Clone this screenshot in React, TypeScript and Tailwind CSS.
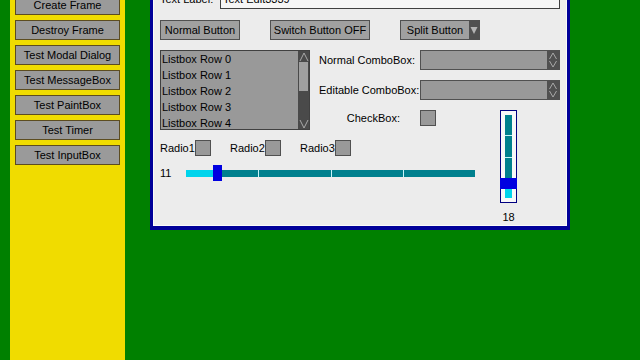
import React from "react";

const font = { fontFamily: '"Liberation Sans", Arial, sans-serif' };

function SideButton({ label }: { label: string }) {
  return (
    <div className="ml-[5px] w-[105px] h-[20px] shrink-0 border border-[#5c4c20] bg-[#9a9a9a] flex items-center justify-center text-[11px] text-black leading-none">
      {label}
    </div>
  );
}

function WinButton({ label, w }: { label: string; w: string }) {
  return (
    <div className={`${w} h-[20px] border border-[#505050] bg-[#a0a0a0] flex items-center justify-center text-[11px] leading-none`}>
      {label}
    </div>
  );
}

function UpDown() {
  return (
    <svg width="10" height="18" viewBox="0 0 10 18">
      <polyline points="1.5,8 5,2 8.5,8" fill="none" stroke="#a8a8a8" strokeWidth="1" />
      <polyline points="1.5,10 5,16 8.5,10" fill="none" stroke="#a8a8a8" strokeWidth="1" />
    </svg>
  );
}

function Combo() {
  return (
    <div className="w-[140px] h-[20px] border border-[#505050] bg-[#999999] flex justify-end">
      <div className="w-[12px] h-full bg-[#505050] flex items-center justify-center">
        <UpDown />
      </div>
    </div>
  );
}

function Box() {
  return <div className="w-[16px] h-[16px] border border-[#505050] bg-[#999999] shrink-0" />;
}

function Radio({ label }: { label: string }) {
  return (
    <div className="w-[70px] flex items-center">
      <span className="w-[35px] text-[11px] leading-none">{label}</span>
      <Box />
    </div>
  );
}

export default function App() {
  const rows = ["Listbox Row 0", "Listbox Row 1", "Listbox Row 2", "Listbox Row 3", "Listbox Row 4"];
  return (
    <div className="w-[640px] h-[360px] overflow-hidden bg-[#008000] flex items-start text-black" style={font}>
      {/* Sidebar */}
      <div className="ml-[10px] w-[115px] h-[360px] bg-[#f0dc00] shrink-0">
        <div className="-mt-[5px] flex flex-col gap-[5px]">
          {["Create Frame", "Destroy Frame", "Test Modal Dialog", "Test MessageBox", "Test PaintBox", "Test Timer", "Test InputBox"].map((l) => (
            <SideButton key={l} label={l} />
          ))}
        </div>
      </div>

      {/* Window */}
      <div className="ml-[25px] -mt-[20px] w-[420px] h-[250px] shrink-0 border-x-[3px] border-t-[3px] border-b-[4px] border-[#000099] flex">
        <div className="flex-1 border border-[#fafafa] bg-[#ececec] pl-[6px] pt-[5px] flex flex-col">
          {/* Row 1 */}
          <div className="flex items-center h-[20px]">
            <span className="w-[60px] text-[11px] leading-none">Text Label:</span>
            <div className="w-[340px] h-[20px] border border-[#404040] bg-[#f6f6f6] flex items-center pl-[2px] text-[11px] leading-none">
              Text Edit3339
            </div>
          </div>

          {/* Row 2 buttons */}
          <div className="mt-[11px] flex items-center gap-[30px]">
            <WinButton label="Normal Button" w="w-[80px]" />
            <WinButton label="Switch Button OFF" w="w-[100px]" />
            <div className="w-[80px] h-[20px] border border-[#505050] bg-[#a0a0a0] flex">
              <div className="flex-1 flex items-center justify-center text-[11px] leading-none">Split Button</div>
              <div className="w-[10px] h-full bg-[#505050] flex items-center justify-center">
                <svg width="8" height="10" viewBox="0 0 8 10">
                  <polygon points="0.5,2 7.5,2 4,9" fill="#b4b4b4" />
                </svg>
              </div>
            </div>
          </div>

          {/* Top body */}
          <div className="mt-[10px] flex items-start h-[80px]">
            <div className="w-[150px] h-[80px] border border-[#404040] bg-[#999999] flex">
              <div className="flex-1 pl-px flex flex-col">
                {rows.map((r) => (
                  <div key={r} className="h-[16px] leading-[16px] text-[11px]">
                    {r}
                  </div>
                ))}
              </div>
              <div className="w-[11px] h-full bg-[#4a4a4a] flex flex-col">
                <div className="h-[11px] flex items-center justify-center">
                  <svg width="10" height="10" viewBox="0 0 10 10">
                    <polyline points="1,9 5,1 9,9" fill="none" stroke="#a8a8a8" strokeWidth="1" />
                  </svg>
                </div>
                <div className="h-[29px] mx-px bg-[#a0a0a0]" />
                <div className="flex-1" />
                <div className="h-[11px] flex items-center justify-center">
                  <svg width="10" height="10" viewBox="0 0 10 10">
                    <polyline points="1,1 5,9 9,1" fill="none" stroke="#a8a8a8" strokeWidth="1" />
                  </svg>
                </div>
              </div>
            </div>

            <div className="ml-[9px] flex flex-col">
              <div className="flex items-center">
                <span className="w-[101px] text-[11px] leading-none">Normal ComboBox:</span>
                <Combo />
              </div>
              <div className="mt-[10px] flex items-center">
                <span className="w-[101px] text-[11px] leading-none">Editable ComboBox:</span>
                <Combo />
              </div>
              <div className="mt-[10px] flex items-center">
                <span className="w-[101px] pr-[20px] text-right text-[11px] leading-none">CheckBox:</span>
                <Box />
              </div>
            </div>
          </div>

          {/* Bottom body */}
          <div className="mt-[10px] flex items-start">
            <div className="w-[340px] flex flex-col">
              <div className="h-[16px] flex items-center">
                <Radio label="Radio1" />
                <Radio label="Radio2" />
                <Radio label="Radio3" />
              </div>
              <div className="mt-[9px] h-[16px] flex items-center">
                <span className="w-[26px] text-[11px] leading-none">11</span>
                <div className="relative w-[289px] h-[7px] flex items-center">
                  <div className="w-[27px] h-full bg-[#00d4ec]" />
                  <div className="w-[9px] h-[16px] bg-[#0000e0] z-10" />
                  <div className="flex-1 h-full bg-[#00808e]" />
                  <div className="absolute left-[72px] top-0 w-px h-full bg-[#c8f4fa]" />
                  <div className="absolute left-[145px] top-0 w-px h-full bg-[#c8f4fa]" />
                  <div className="absolute left-[217px] top-0 w-px h-full bg-[#c8f4fa]" />
                </div>
              </div>
            </div>

            <div className="-mt-[30px] w-[17px] flex flex-col items-center">
              <div className="w-[17px] h-[93px] border border-[#000080] bg-[#f8f8f8] flex flex-col items-center pt-[4px]">
                <div className="relative w-[7px] h-[63px] bg-[#00808e] shrink-0">
                  <div className="absolute left-0 top-[20px] w-full h-px bg-[#c8f4fa]" />
                  <div className="absolute left-0 top-[42px] w-full h-px bg-[#c8f4fa]" />
                </div>
                <div className="w-[17px] h-[11px] bg-[#0000e0] shrink-0" />
                <div className="w-[7px] h-[9px] bg-[#00d4ec] shrink-0" />
              </div>
              <span className="mt-[8px] text-[11px] leading-[13px]">18</span>
            </div>
          </div>
        </div>
      </div>
    </div>
  );
}
